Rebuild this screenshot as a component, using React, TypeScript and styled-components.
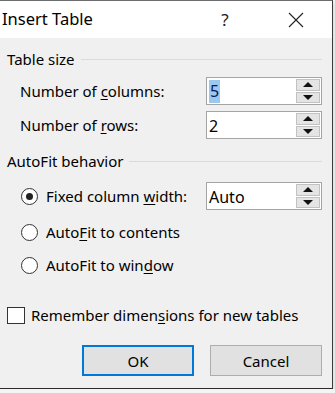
import React from 'react';
import styled, { createGlobalStyle } from 'styled-components';

const GlobalStyle = createGlobalStyle`
  html, body {
    margin: 0;
    padding: 0;
    background: #f4f4f4;
  }
  body {
    font-family: "Noto Sans", "Open Sans", sans-serif;
    color: #000;
  }
`;

const Dialog = styled.div`
  width: 332px;
  height: 387px;
  background: #f0f0f0;
  border-top: 1px solid #6d6d6d;
  border-right: 1px solid #3c3c3c;
  border-bottom: 1px solid #2a2a2a;
  box-shadow: 1px 3px 4px rgba(0, 0, 0, 0.12);
  display: flex;
  flex-direction: column;
`;

const TitleBar = styled.div`
  height: 37px;
  background: #fff;
  display: flex;
  align-items: center;
  padding-left: 2px;
  font-size: 16.5px;
`;

const Title = styled.div`
  flex: 1;
  padding-bottom: 2px;
`;

const Help = styled.div`
  width: 30px;
  margin-right: 48px;
  text-align: center;
  font-size: 17px;
  color: #222;
`;

const Close = styled.div`
  width: 16px;
  height: 16px;
  margin-right: 28px;
  display: flex;
`;

const Body = styled.div`
  padding: 9px 10px 0 7px;
  display: flex;
  flex-direction: column;
  font-size: 15px;
`;

const Header = styled.div<{ $top?: number }>`
  height: 24px;
  margin-top: ${p => p.$top || 0}px;
  display: flex;
  align-items: center;
  gap: 6px;
  &::after {
    content: "";
    flex: 1;
    height: 1px;
    background: #dadada;
  }
`;

const Row = styled.div<{ $top?: number; $indent?: number }>`
  height: 28px;
  margin-top: ${p => p.$top || 0}px;
  padding-left: ${p => p.$indent || 0}px;
  display: flex;
  align-items: center;
`;

const Label = styled.span`
  flex: 1;
  white-space: nowrap;
`;

const U = styled.span`
  text-decoration: underline;
  text-underline-offset: 2px;
`;

const Spin = styled.div`
  width: 114px;
  height: 26px;
  border: 1px solid #a5a5a5;
  background: #fff;
  display: flex;
  align-items: stretch;
`;

const SpinValue = styled.div`
  flex: 1;
  display: flex;
  align-items: center;
  padding: 1px 0 0 2px;
  font-size: 16px;
`;

const Selected = styled.span`
  background: #9cc7ee;
  padding: 0 1px;
  line-height: 23px;
  color: #001a60;
`;

const SpinButtons = styled.div`
  width: 24px;
  margin: 1px 1px 1px 0;
  display: flex;
  flex-direction: column;
  gap: 1px;
`;

const SpinButton = styled.div`
  flex: 1;
  background: #e4e4e4;
  border: 1px solid #c2c2c2;
  display: flex;
  align-items: center;
  justify-content: center;
`;

const Arrow = styled.div<{ $down?: boolean }>`
  width: 0;
  height: 0;
  border-left: 5px solid transparent;
  border-right: 5px solid transparent;
  ${p =>
    p.$down
      ? 'border-top: 5px solid #111;'
      : 'border-bottom: 5px solid #111;'}
`;

const Radio = styled.span<{ $checked?: boolean }>`
  width: 15px;
  height: 15px;
  border: 1px solid #333;
  border-radius: 50%;
  background: #fff;
  margin-right: 8px;
  display: flex;
  align-items: center;
  justify-content: center;
  flex-shrink: 0;
  &::after {
    content: "";
    width: 7px;
    height: 7px;
    border-radius: 50%;
    background: ${p => (p.$checked ? '#222' : 'transparent')};
  }
`;

const Check = styled.span`
  width: 16px;
  height: 15px;
  border: 1px solid #333;
  background: #fff;
  margin-right: 6px;
  flex-shrink: 0;
`;

const Buttons = styled.div`
  margin-top: 16px;
  display: flex;
  justify-content: flex-end;
  gap: 16px;
`;

const Button = styled.button<{ $primary?: boolean }>`
  width: 112px;
  height: 31px;
  font: inherit;
  font-size: 15px;
  background: #e1e1e1;
  border: ${p => (p.$primary ? '2px solid #0078d7' : '1px solid #adadad')};
  color: #000;
  padding: 0;
`;

const Spinner: React.FC<{ children: React.ReactNode }> = ({ children }) => (
  <Spin>
    <SpinValue>{children}</SpinValue>
    <SpinButtons>
      <SpinButton>
        <Arrow />
      </SpinButton>
      <SpinButton>
        <Arrow $down />
      </SpinButton>
    </SpinButtons>
  </Spin>
);

const App: React.FC = () => {
  return (
    <>
      <GlobalStyle />
      <Dialog>
        <TitleBar>
          <Title>Insert Table</Title>
          <Help>?</Help>
          <Close>
            <svg width="16" height="16" viewBox="0 0 16 16">
              <path d="M1 1 L15 15 M15 1 L1 15" stroke="#222" strokeWidth="1.1" fill="none" />
            </svg>
          </Close>
        </TitleBar>
        <Body>
          <Header>Table size</Header>
          <Row $top={6} $indent={13}>
            <Label>
              Number of <U>c</U>olumns:
            </Label>
            <Spinner>
              <Selected>5</Selected>
            </Spinner>
          </Row>
          <Row $top={6} $indent={13}>
            <Label>
              Number of <U>r</U>ows:
            </Label>
            <Spinner>2</Spinner>
          </Row>
          <Header $top={10}>AutoFit behavior</Header>
          <Row $top={9} $indent={14}>
            <Radio $checked />
            <Label>
              Fixed column <U>w</U>idth:
            </Label>
            <Spinner>Auto</Spinner>
          </Row>
          <Row $top={8} $indent={14}>
            <Radio />
            <Label>
              Auto<U>F</U>it to contents
            </Label>
          </Row>
          <Row $top={5} $indent={14}>
            <Radio />
            <Label>
              AutoFit to win<U>d</U>ow
            </Label>
          </Row>
          <Row $top={22}>
            <Check />
            <Label>
              Remember dimen<U>s</U>ions for new tables
            </Label>
          </Row>
          <Buttons>
            <Button $primary>OK</Button>
            <Button>Cancel</Button>
          </Buttons>
        </Body>
      </Dialog>
    </>
  );
};

export default App;
